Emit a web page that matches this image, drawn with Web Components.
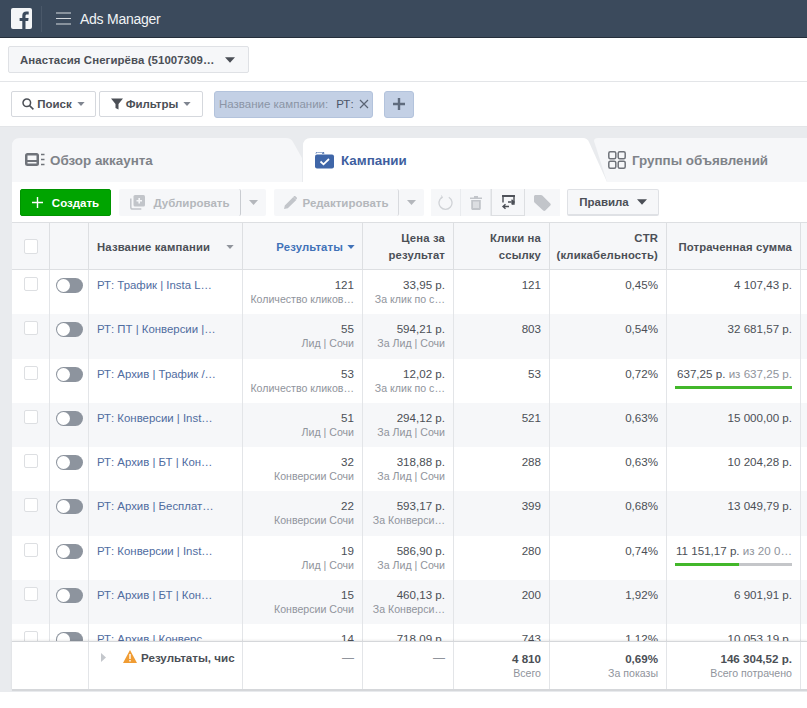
<!DOCTYPE html>
<html lang="ru">
<head>
  <meta charset="UTF-8">
  <title>Ads Manager</title>
  <style>
    html, body { margin: 0; height: 708px; overflow: hidden; background: #fff; }
    body { font: 12px "Liberation Sans", Arial, sans-serif; color: #4b4f56; --cols: 38px 39px 154px 120px 91px 96px 117px 134px 60px; }
    ads-page { height: 708px; }
  </style>
</head>
<body>
  <ads-page>
    <top-bar></top-bar>
    <account-bar>Анастасия Снегирёва (51007309…</account-bar>
    <filter-bar></filter-bar>
    <ads-panel>
      <camp-tabs></camp-tabs>
      <ads-toolbar></ads-toolbar>
      <ads-table></ads-table>
    </ads-panel>
  </ads-page>

  <script>
    const ARROW = '<svg width="9" height="5" viewBox="0 0 9 5"><path d="M0 0h9L4.5 5z" fill="currentColor"/></svg>'

    class AdsPage extends HTMLElement {
      constructor () {
        super()
        this.attachShadow({mode: 'open'}).innerHTML = `
          <style>:host { display: flex; flex-direction: column; }</style>
          <slot></slot>`
      }
    }

    class TopBar extends HTMLElement {
      constructor () {
        super()
        this.attachShadow({mode: 'open'}).innerHTML = `
          <style>
            :host { display: flex; align-items: center; height: 37px; background: #3b4a5c; border-bottom: 1px solid #252f3b; color: #fff; flex: none; }
            .logo { margin-left: 11px; width: 21px; height: 21px; }
            .sep { width: 1px; height: 26px; background: #4a5869; margin-left: 9px; }
            .menu { margin-left: 14px; width: 15px; height: 13px; }
            .title { margin-left: 9px; font-size: 14px; color: #f1f3f5; letter-spacing: -.25px; }
          </style>
          <svg class="logo" viewBox="0 0 21 21"><rect width="21" height="21" rx="2" fill="#f4f5f7"/><path d="M14.5 21v-8h2.7l.4-3.1h-3.100V8c0-.9.3-1.500 1.600-1.500h1.600V3.700c-.3 0-1.300-.1-2.400-.1-2.400 0-4 1.400-4 4.100v2.200H8.600V13h2.700v8z" fill="#3b4a5c"/></svg>
          <div class="sep"></div>
          <svg class="menu" viewBox="0 0 15 13"><path d="M0 1h15M0 6.500h15M0 12h15" stroke="#d5d9de" stroke-width="1.200"/></svg>
          <span class="title">Ads Manager</span>`
      }
    }

    class AccountBar extends HTMLElement {
      constructor () {
        super()
        this.attachShadow({mode: 'open'}).innerHTML = `
          <style>
            :host { display: flex; align-items: center; height: 43px; padding-left: 8px; border-bottom: 1px solid #e3e5e8; flex: none; }
            .btn { display: flex; align-items: center; justify-content: space-between; box-sizing: border-box; width: 241px; height: 27px; padding: 0 13px 0 11px; background: #f6f7f9; border: 1px solid #dfe1e5; border-radius: 2px; font-weight: bold; font-size: 11.4px; color: #4b4f56; letter-spacing: .1px; }
            svg { width: 10px; height: 6px; color: #4b4f56; }
          </style>
          <div class="btn"><span><slot></slot></span>${ARROW}</div>`
      }
    }

    class FilterBar extends HTMLElement {
      constructor () {
        super()
        this.attachShadow({mode: 'open'}).innerHTML = `
          <style>
            :host { display: flex; align-items: center; height: 44px; padding-left: 11px; border-bottom: 1px solid #e3e5e8; flex: none; }
            .btn { display: flex; align-items: center; justify-content: center; gap: 3px; box-sizing: border-box; height: 26px; background: #fff; border: 1px solid #d5d8dd; border-radius: 2px; font-weight: bold; font-size: 11.5px; color: #4b4f56; }
            .search { width: 85px; }
            .filters { width: 104px; margin-left: 3px; }
            .arrow { width: 8px; height: 4px; color: #7f8590; margin-left: 2px; }
            .chip { display: flex; align-items: center; box-sizing: border-box; width: 159px; height: 27px; margin-left: 11px; padding-left: 4px; background: #c3d0e5; border: 1px solid #b3c3dc; border-radius: 3px; font-size: 11.5px; color: #8b95a5; white-space: nowrap; }
            .chip b { font-weight: normal; color: #4b5568; margin-left: 8px; }
            .chip svg { margin-left: 5px; }
            .plus { display: flex; align-items: center; justify-content: center; box-sizing: border-box; width: 30px; height: 27px; margin-left: 11px; background: #c3d0e5; border: 1px solid #b3c3dc; border-radius: 3px; }
          </style>
          <div class="btn search">
            <svg width="12" height="12" viewBox="0 0 12 12" fill="none" stroke="#4b4f56" stroke-width="1.500"><circle cx="4.800" cy="4.800" r="3.800"/><path d="M7.600 7.600l3.800 3.800"/></svg>
            <span>Поиск</span><svg class="arrow" viewBox="0 0 9 5"><path d="M0 0h9L4.500 5z" fill="currentColor"/></svg>
          </div>
          <div class="btn filters">
            <svg width="12" height="12" viewBox="0 0 12 12"><path d="M0 .5h12L7.500 6v5.500l-3-1.500V6z" fill="#4b4f56"/></svg>
            <span>Фильтры</span><svg class="arrow" viewBox="0 0 9 5"><path d="M0 0h9L4.500 5z" fill="currentColor"/></svg>
          </div>
          <div class="chip">Название кампании:<b>РТ:</b>
            <svg width="10" height="10" viewBox="0 0 10 10"><path d="M1 1l8 8M9 1l-8 8" stroke="#5a6474" stroke-width="1.200"/></svg>
          </div>
          <div class="plus"><svg width="12" height="12" viewBox="0 0 12 12"><path d="M6 0v12M0 6h12" stroke="#5f6b7d" stroke-width="2.400"/></svg></div>`
      }
    }

    class AdsPanel extends HTMLElement {
      constructor () {
        super()
        this.attachShadow({mode: 'open'}).innerHTML = `
          <style>
            :host { display: block; background: #e9ebee; padding: 11px 0 0 12px; height: 565px; box-sizing: border-box; flex: none; overflow: hidden; }
          </style>
          <slot></slot>`
      }
    }

    class CampTabs extends HTMLElement {
      constructor () {
        super()
        this.attachShadow({mode: 'open'}).innerHTML = `
          <style>
            :host { display: flex; height: 44px; font-size: 13.4px; font-weight: bold; color: #7f8389; overflow: hidden; }
            .tab { display: flex; align-items: center; box-sizing: border-box; background: #f6f7f9; white-space: nowrap; flex: none; }
            .t1 { width: 291px; padding-left: 13px; gap: 5px; clip-path: path('M0 8Q0 0 8 0H274Q279 0 281 4L290 20V44H0Z'); }
            .t2 { width: 304px; margin-right: -13px; padding-left: 12px; gap: 6px; background: #fff; color: #3f5f9f; clip-path: path('M0 8Q0 0 8 0H280Q284 0 286 4L304 44H0Z'); }
            .t3 { width: 240px; padding-left: 14px; gap: 6px; clip-path: path('M0 3Q0 0 4 0H240V44H13Z'); }
          </style>
          <div class="tab t1">
            <svg width="20" height="14" viewBox="0 0 20 14"><rect x="0" y="0" width="14" height="13" rx="2.500" fill="#6f737a"/><rect x="2.500" y="2.500" width="9" height="4.500" fill="#f6f7f9"/><rect x="2.500" y="9" width="9" height="1.500" fill="#f6f7f9"/><path d="M16 1.500h3.500M16 6.500h3.500M16 11.500h3.500" stroke="#6f737a" stroke-width="1.500"/></svg>
            <span>Обзор аккаунта</span>
          </div>
          <div class="tab t2">
            <svg width="20" height="17" viewBox="0 0 20 17"><path d="M1 1.500C1 .7 1.700 0 2.500 0h5c.8 0 1.200.4 1.600 1.200H7" fill="none" stroke="#3f66a8"/><rect x="0" y="2.500" width="19" height="14" rx="2" fill="#3f66a8"/><path d="M5.500 9.500l3 2.800 5.500-5.300" fill="none" stroke="#fff" stroke-width="1.800"/></svg>
            <span>Кампании</span>
          </div>
          <div class="tab t3">
            <svg width="18" height="18" viewBox="0 0 18 18" fill="none" stroke="#6f737a" stroke-width="1.500"><rect x=".8" y=".8" width="7" height="7" rx="1.500"/><rect x="10.200" y=".8" width="7" height="7" rx="1.500"/><rect x=".8" y="10.200" width="7" height="7" rx="1.500"/><rect x="10.200" y="10.200" width="7" height="7" rx="1.500"/></svg>
            <span>Группы объявлений</span>
          </div>`
      }
    }

    class AdsToolbar extends HTMLElement {
      constructor () {
        super()
        this.attachShadow({mode: 'open'}).innerHTML = `
          <style>
            :host { display: flex; align-items: center; box-sizing: border-box; height: 41px; padding: 1px 0 0 8px; background: #fff; font-size: 11.5px; font-weight: bold; color: #b4b7bc; border-bottom: 1px solid #dddfe2; overflow: hidden; }
            .btn { display: flex; align-items: center; justify-content: center; box-sizing: border-box; height: 27px; background: #f6f7f9; border-radius: 2px; white-space: nowrap; flex: none; }
            .create { width: 91px; background: #00a400; color: #fff; gap: 9px; margin-right: 8px; border: 1px solid #009400; }
            .dup { width: 122px; gap: 9px; border-right: 1px solid #c9ccd1; }
            .split { width: 25px; margin-right: 8px; color: #b4b7bc; }
            .edit { width: 125px; gap: 6px; border-right: 1px solid #d8dade; }
            .split.s2 { width: 25px; margin-right: 7px; }
            .grp { display: flex; margin-right: 7px; height: 27px; }
            .grp .btn { border-right: 1px solid #e9ebee; border-radius: 0; }
            .grp .active { background: #f6f7f9; border: 1px solid #dddfe2; border-width: 0 1px 1px 1px; }
            .rules { width: 92px; gap: 8px; color: #4b4f56; border: 1px solid #dfe1e5; border-bottom-width: 2px; }
            .rules svg { width: 10px; height: 6px; }
          </style>
          <div class="btn create">
            <svg width="11" height="11" viewBox="0 0 11 11"><path d="M5.500 0v11M0 5.500h11" stroke="#fff" stroke-width="1.400"/></svg>
            <span>Создать</span>
          </div>
          <div class="btn dup">
            <svg width="15" height="15" viewBox="0 0 15 15"><path d="M.8 3.500v8.700c0 1 .8 1.800 1.800 1.800h8.700" fill="none" stroke="#c2c5ca" stroke-width="1.500"/><rect x="3.500" y="0" width="11.500" height="11.500" rx="1.500" fill="#c2c5ca"/><path d="M9.200 3v5.500M6.500 5.700h5.500" stroke="#f6f7f9" stroke-width="1.600"/></svg>
            <span>Дублировать</span>
          </div>
          <div class="btn split">${ARROW}</div>
          <div class="btn edit">
            <svg width="13" height="13" viewBox="0 0 13 13"><path d="M0 13l.8-3.500L9.300 1l3 3-8.500 8.300zM10 .3c.4-.4 1-.4 1.400 0l1.300 1.300c.4.4.4 1 0 1.400l-.6.500-2.700-2.700z" fill="#c2c5ca"/></svg>
            <span>Редактировать</span>
          </div>
          <div class="btn split s2">${ARROW}</div>
          <div class="grp">
            <div class="btn" style="width:30px">
              <svg width="15" height="15" viewBox="0 0 15 15" fill="none" stroke="#cfd2d6" stroke-width="1.300"><path d="M4.200 2.200a6.500 6.500 0 1 0 6.600 0"/><path d="M3.500 .5l.9 2.200-2.200.5" stroke-width="1"/></svg>
            </div>
            <div class="btn" style="width:30px">
              <svg width="12" height="15" viewBox="0 0 12 15"><path d="M0 2.500h12v1.500H0zM4 1h4v1.500H4z" fill="#c2c5ca"/><path d="M1.200 5h9.600v8.500c0 .8-.7 1.500-1.500 1.500H2.700c-.8 0-1.500-.7-1.500-1.500z" fill="#c2c5ca"/><path d="M4 6.500v6.500M6 6.500v6.500M8 6.500v6.500" stroke="#f6f7f9"/></svg>
            </div>
            <div class="btn active" style="width:34px">
              <svg width="15" height="15" viewBox="0 0 15 15" fill="none" stroke="#4b4f56"><path d="M2 7.500V1h11v8h-2" stroke-width="1.400"/><path d="M1 1h13" stroke-width="1.800"/><path d="M7 7h6M10.500 4.700L13 7l-2.500 2.300M8 11.500H2M4.500 9.200L2 11.500l2.500 2.300" stroke-width="1.400"/></svg>
            </div>
            <div class="btn" style="width:35px;border-right:0">
              <svg width="17" height="16" viewBox="0 0 17 16"><path d="M0 1.500C0 .7.700 0 1.500 0H7c.5 0 1 .2 1.300.5l8 8c.6.600.6 1.500 0 2.100l-5 5c-.6.500-1.500.5-2.100 0l-8.700-8C.2 7.300 0 6.800 0 6.300z" fill="#c2c5ca"/></svg>
            </div>
          </div>
          <div class="btn rules"><span>Правила</span>${ARROW}</div>`
      }
    }

    class AdRow extends HTMLElement {
      constructor () {
        super()
        this.attachShadow({mode: 'open'})
      }
      connectedCallback () {
        const d = JSON.parse(this.getAttribute('data'))
        let spent = `${d.spent}`
        if (d.limit) {
          spent = `<div class="sp"><span>${d.spent}</span> <i>${d.limit}</i></div><div class="bar"><b style="width:${d.pct}%"></b></div>`
        }
        const sub = text => text ? `<small>${text}</small>` : ''
        this.shadowRoot.innerHTML = `
          <style>
            :host { display: grid; grid-template-columns: var(--cols); flex: none; height: 44.3px; background: ${this.hasAttribute('even') ? '#f6f7f9' : '#fff'}; font-size: 11.6px; line-height: 14px; }
            .c { box-sizing: border-box; border-right: 1px solid #e3e5e8; padding: 8px 8px 0 0; text-align: right; white-space: nowrap; overflow: hidden; min-width: 0; }
            .c:last-child { border-right: 0; }
            small { display: block; font-size: 10.6px; color: #90949c; }
            .check { padding: 7px 0 0 12px; }
            .check div { width: 14px; height: 14px; box-sizing: border-box; background: #fff; border: 1px solid #dddfe2; border-radius: 2px; }
            .tg { padding: 8px 0 0 6px; }
            .tg div { position: relative; width: 27px; height: 15px; border-radius: 8px; background: #8d949e; }
            .tg div::after { content: ""; position: absolute; left: 1px; top: 1px; width: 13px; height: 13px; border-radius: 50%; background: #fff; }
            .name { text-align: left; padding-left: 8px; color: #4f6c9f; font-size: 11.4px; }
            .sp { padding-right: 0; }
            .sp i { font-style: normal; color: #90949c; }
            .bar { height: 3px; margin-top: 5px; background: #c4c6c9; }
            .bar b { display: block; height: 3px; background: #42b72a; }
            .spent { padding-left: 8px; }
          </style>
          <div class="c check"><div></div></div>
          <div class="c tg"><div></div></div>
          <div class="c name">${d.name}</div>
          <div class="c">${d.res}${sub(d.resSub)}</div>
          <div class="c">${d.price}${sub(d.priceSub)}</div>
          <div class="c">${d.clicks}</div>
          <div class="c">${d.ctr}</div>
          <div class="c spent">${spent}</div>
          <div class="c"></div>`
      }
    }

    class AdsTable extends HTMLElement {
      constructor () {
        super()
        const rows = [
          {name: 'РТ: Трафик | Insta L…', res: '121', resSub: 'Количество кликов…', price: '33,95 р.', priceSub: 'За клик по с…', clicks: '121', ctr: '0,45%', spent: '4 107,43 р.'},
          {name: 'РТ: ПТ | Конверсии |…', res: '55', resSub: 'Лид | Сочи', price: '594,21 р.', priceSub: 'За Лид | Сочи', clicks: '803', ctr: '0,54%', spent: '32 681,57 р.'},
          {name: 'РТ: Архив | Трафик /…', res: '53', resSub: 'Количество кликов…', price: '12,02 р.', priceSub: 'За клик по с…', clicks: '53', ctr: '0,72%', spent: '637,25 р.', limit: 'из 637,25 р.', pct: 100},
          {name: 'РТ: Конверсии | Inst…', res: '51', resSub: 'Лид | Сочи', price: '294,12 р.', priceSub: 'За Лид | Сочи', clicks: '521', ctr: '0,63%', spent: '15 000,00 р.'},
          {name: 'РТ: Архив | БТ | Кон…', res: '32', resSub: 'Конверсии Сочи', price: '318,88 р.', priceSub: 'За Лид | Сочи', clicks: '288', ctr: '0,63%', spent: '10 204,28 р.'},
          {name: 'РТ: Архив | Бесплат…', res: '22', resSub: 'Конверсии Сочи', price: '593,17 р.', priceSub: 'За Конверси…', clicks: '399', ctr: '0,68%', spent: '13 049,79 р.'},
          {name: 'РТ: Конверсии | Inst…', res: '19', resSub: 'Лид | Сочи', price: '586,90 р.', priceSub: 'За Лид | Сочи', clicks: '280', ctr: '0,74%', spent: '11 151,17 р.', limit: 'из 20 0…', pct: 55},
          {name: 'РТ: Архив | БТ | Кон…', res: '15', resSub: 'Конверсии Сочи', price: '460,13 р.', priceSub: 'За Конверси…', clicks: '200', ctr: '1,92%', spent: '6 901,91 р.'},
          {name: 'РТ: Архив | Конверс…', res: '14', price: '718,09 р.', clicks: '743', ctr: '1,12%', spent: '10 053,19 р.'}
        ]
        const root = this.attachShadow({mode: 'open'})
        root.innerHTML = `
          <style>
            :host { display: block; background: #fff; color: #4b4f56; }
            .head, .foot { display: grid; grid-template-columns: var(--cols); }
            .head { height: 47px; background: #f6f7f9; border-bottom: 1px solid #dddfe2; box-sizing: border-box; font-weight: bold; font-size: 11.3px; line-height: 17px; letter-spacing: .15px; }
            .head > div { display: flex; align-items: center; justify-content: flex-end; text-align: right; box-sizing: border-box; border-right: 1px solid #dddfe2; padding: 2px 8px 0 0; }
            .head > div:last-child { border-right: 0; }
            .head .box { justify-content: flex-start; padding: 0 0 0 12px; }
            .head .box i { width: 14px; height: 15px; box-sizing: border-box; background: #fff; border: 1px solid #dddfe2; border-radius: 2px; }
            .head .title { justify-content: space-between; text-align: left; padding: 2px 8px 0 8px; }
            .head .title svg { color: #90949c; width: 8px; height: 4px; }
            .head .sorted { color: #4172b8; gap: 4px; padding-right: 7px; }
            .head .sorted svg { width: 8px; height: 4px; }
            .body { height: 371px; overflow: hidden; display: flex; flex-direction: column; }
            .foot { height: 50px; box-sizing: border-box; border-top: 1px solid #d5d7da; border-bottom: 2px solid #d5d7da; box-shadow: 0 -1px 2px rgba(0,0,0,.08); position: relative; line-height: 15px; font-size: 11.6px; }
            .foot > div { box-sizing: border-box; border-right: 1px solid #e3e5e8; text-align: right; padding: 9px 8px 0 0; white-space: nowrap; overflow: hidden; }
            .foot > div:last-child { border-right: 0; }
            .foot b { display: block; }
            .foot small { display: block; font-size: 10.6px; color: #90949c; }
            .foot .dash { color: #90949c; font-size: 12px; }
            .foot .blank { grid-column: span 2; }
            .foot .label { display: flex; align-items: flex-start; padding: 8px 0 0 12px; text-align: left; }
            .foot .label b { margin-left: 4px; }
            .foot .label .tri { margin: 3px 0 0 0; flex: none; }
            .foot .label .warn { margin: 0 0 0 17px; flex: none; }
          </style>
          <div class="head">
            <div class="box"><i></i></div>
            <div></div>
            <div class="title"><span>Название кампании</span>${ARROW}</div>
            <div class="sorted"><span>Результаты</span>${ARROW}</div>
            <div>Цена за<br>результат</div>
            <div>Клики на<br>ссылку</div>
            <div>CTR<br>(кликабельность)</div>
            <div>Потраченная сумма</div>
            <div></div>
          </div>
          <div class="body"></div>
          <div class="foot">
            <div class="blank"></div>
            <div class="label">
              <svg class="tri" width="5" height="9" viewBox="0 0 5 9"><path d="M0 0l5 4.500L0 9z" fill="#c4c7cc"/></svg>
              <svg class="warn" width="14" height="13" viewBox="0 0 14 13"><path d="M7 0l7 13H0z" fill="#f09c33"/><path d="M7 4v5M7 10v1.500" stroke="#fff" stroke-width="1.400"/></svg>
              <b>Результаты, чис</b>
            </div>
            <div class="dash">—</div>
            <div class="dash">—</div>
            <div><b>4 810</b><small>Всего</small></div>
            <div><b>0,69%</b><small>За показы</small></div>
            <div><b>146 304,52 р.</b><small>Всего потрачено</small></div>
            <div></div>
          </div>`
        const body = root.querySelector('.body')
        rows.forEach((r, i) => {
          const el = document.createElement('ad-row')
          el.setAttribute('data', JSON.stringify(r))
          if (i % 2) el.setAttribute('even', '')
          body.appendChild(el)
        })
      }
    }

    customElements.define('ads-page', AdsPage)
    customElements.define('top-bar', TopBar)
    customElements.define('account-bar', AccountBar)
    customElements.define('filter-bar', FilterBar)
    customElements.define('ads-panel', AdsPanel)
    customElements.define('camp-tabs', CampTabs)
    customElements.define('ads-toolbar', AdsToolbar)
    customElements.define('ad-row', AdRow)
    customElements.define('ads-table', AdsTable)
  </script>
</body>
</html>
